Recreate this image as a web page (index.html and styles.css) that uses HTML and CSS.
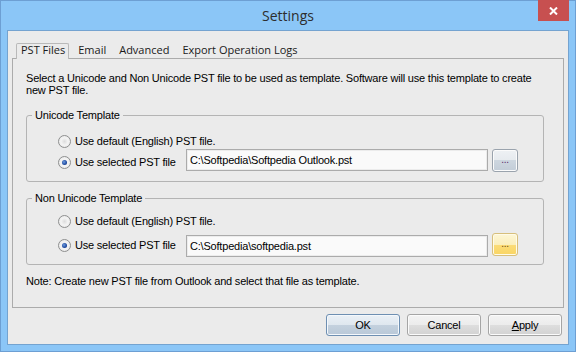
FILE: index.html
```html
<!DOCTYPE html>
<html lang="en">
<head>
    <meta charset="UTF-8">
    <title>Settings</title>
    <link rel="stylesheet" href="styles.css">
</head>
<body>

    <div class="window">
        <div class="titlebar">
            <span></span>
            <div class="title">Settings</div>
            <div class="close">
                <svg width="9" height="8" viewBox="0 0 9 8"><path d="M1 0.5 L8 7.5 M8 0.5 L1 7.5" stroke="#fff" stroke-width="2"/></svg>
            </div>
        </div>

        <div class="client">
            <div class="tabs">
                <span class="tab active">PST Files</span>
                <span class="tab">Email</span>
                <span class="tab">Advanced</span>
                <span class="tab">Export Operation Logs</span>
            </div>

            <div class="panel">
                <p class="intro">Select a Unicode and Non Unicode PST file to be used as template. Software will use this template to create<br>new PST file.</p>

                <fieldset class="group group-a">
                    <legend>Unicode Template</legend>
                    <div class="group-body">
                        <div class="opt first"><span class="radio"></span>Use default (English) PST file.</div>
                        <div class="opt-row">
                            <div class="opt"><span class="radio checked"></span>Use selected PST file</div>
                            <div class="textbox">C:\Softpedia\Softpedia Outlook.pst</div>
                            <div class="btn browse">...</div>
                        </div>
                    </div>
                </fieldset>

                <fieldset class="group group-b">
                    <legend>Non Unicode Template</legend>
                    <div class="group-body">
                        <div class="opt first"><span class="radio"></span>Use default (English) PST file.</div>
                        <div class="opt-row">
                            <div class="opt"><span class="radio checked"></span>Use selected PST file</div>
                            <div class="textbox">C:\Softpedia\softpedia.pst</div>
                            <div class="btn browse hot">...</div>
                        </div>
                    </div>
                </fieldset>

                <p class="note">Note: Create new PST file from Outlook and select that file as template.</p>
            </div>

            <div class="actions">
                <div class="btn action default">OK</div>
                <div class="btn action">Cancel</div>
                <div class="btn action"><u>A</u>pply</div>
            </div>
        </div>
    </div>

</body>
</html>
```

FILE: styles.css
```css
/* Global Reset */
* {
    margin: 0;
    padding: 0;
    box-sizing: border-box;
}

body {
    font-family: 'Liberation Sans', Arial, sans-serif;
    font-size: 11px;
    letter-spacing: -0.2px;
    color: #000;
    background-color: #8bc6f7;
}

/* Window frame */
.window {
    width: 576px;
    height: 352px;
    background-color: #8bc6f7;
    border: 1px solid #6d9fd3;
}

.titlebar {
    height: 29px;
    display: grid;
    grid-template-columns: 1fr auto 1fr;
}

.title {
    font-family: 'Open Sans', sans-serif;
    font-size: 14px;
    letter-spacing: 0;
    line-height: 29px;
    color: #2d2d2d;
}

.close {
    justify-self: end;
    align-self: start;
    width: 31px;
    height: 21px;
    margin-top: -1px;
    margin-right: 6px;
    background-color: #c75050;
    display: flex;
    justify-content: center;
    align-items: center;
}

.client {
    height: 315px;
    margin: 0 6px;
    background-color: #ebebeb;
    border: 1px solid #74a3d0;
}

/* Tabs */
.tabs {
    height: 15px;
    margin: 12px 0 0 8px;
    display: flex;
    gap: 4px;
    position: relative;
    z-index: 1;
}

.tab {
    font-family: 'Open Sans', sans-serif;
    font-size: 11px;
    letter-spacing: 0;
    line-height: 12px;
    height: 16px;
    padding: 0 3px 3px 4px;
    border: 1px solid transparent;
    border-bottom: none;
    color: #1a1a1a;
}

.tab.active {
    background-color: #ebebeb;
    border-color: #b9b9b9;
    border-radius: 2px 2px 0 0;
}

.panel {
    height: 250px;
    margin: 0 4px;
    border: 1px solid #ababab;
}

.intro {
    margin: 13px 0 0 13px;
    line-height: 12px;
}

/* Group boxes */
.group {
    width: 518px;
    margin: 13px 0 0 13px;
    border: 1px solid #b4b4b4;
    border-radius: 3px;
}

.group legend {
    margin-left: 5px;
    padding: 0 3px;
    line-height: 13px;
}

.group-b {
    margin-top: 10px;
}

.group-body {
    padding: 0 0 9px 31px;
}

.group-b .group-body {
    padding-bottom: 8px;
}

.opt {
    height: 13px;
    line-height: 13px;
    display: flex;
    align-items: center;
    white-space: nowrap;
}

.opt.first {
    margin-top: 13px;
}

.group-b .opt.first {
    margin-top: 10px;
}

.opt-row {
    height: 23px;
    margin-top: 1px;
    display: flex;
    align-items: flex-start;
}

.group-b .opt-row {
    margin-top: 5px;
}

.opt-row .opt {
    width: 128px;
    margin-top: 7px;
}

.group-b .opt-row .opt {
    margin-top: 6px;
}

.radio {
    width: 13px;
    height: 13px;
    margin-right: 4px;
    border-radius: 50%;
    border: 1px solid #8e8f8f;
    background: radial-gradient(circle at 50% 50%, #dcdcdc 0, #f4f4f4 45%, #e2e2e2 100%);
    display: flex;
    justify-content: center;
    align-items: center;
    flex-shrink: 0;
}

.radio.checked::after {
    content: "";
    width: 5px;
    height: 5px;
    border-radius: 50%;
    background: radial-gradient(circle at 40% 40%, #6f9de0 0, #1f4aa0 60%, #10317a 100%);
}

.textbox {
    width: 302px;
    height: 22px;
    padding: 0 3px;
    line-height: 20px;
    background-color: #fafafa;
    border: 1px solid #ababab;
    box-shadow: inset 0 0 0 1px #ececec;
    white-space: nowrap;
    overflow: hidden;
}

.group-b .textbox {
    margin-top: 2px;
}

.note {
    margin: 10px 0 0 13px;
    line-height: 13px;
}

/* Buttons */
.btn {
    height: 23px;
    border: 1px solid #a5a5a5;
    border-radius: 3px;
    background: linear-gradient(#f3f3f3 0%, #ececec 50%, #dedede 50%, #d2d2d2 100%);
    box-shadow: inset 0 0 0 1px #fbfbfb;
    display: flex;
    justify-content: center;
    align-items: center;
    line-height: 13px;
}

.browse {
    width: 26px;
    margin-left: 4px;
    font-size: 10px;
    padding-bottom: 3px;
    color: #5a2a6a;
    border-color: #9aa3ad;
    background: linear-gradient(#eef1f4 0%, #e6eaee 50%, #cdd6df 50%, #c3cdd8 100%);
}

.browse.hot {
    border-color: #d7bf7c;
    color: #6a4a10;
    background: linear-gradient(#fdf6d6 0%, #fbefbb 50%, #fbdc78 50%, #f9d563 100%);
    box-shadow: inset 0 0 0 1px #fffbe8;
}

.actions {
    margin-top: 6px;
    padding-right: 6px;
    display: flex;
    justify-content: flex-end;
    gap: 7px;
}

.action {
    width: 74px;
    height: 22px;
}

.action.default {
    border-color: #6e8fb2;
    background: linear-gradient(#eaf0f6 0%, #dfe7ef 50%, #c4d1de 50%, #b9c8d8 100%);
    box-shadow: inset 0 0 0 1px #f4f8fc;
}
```
